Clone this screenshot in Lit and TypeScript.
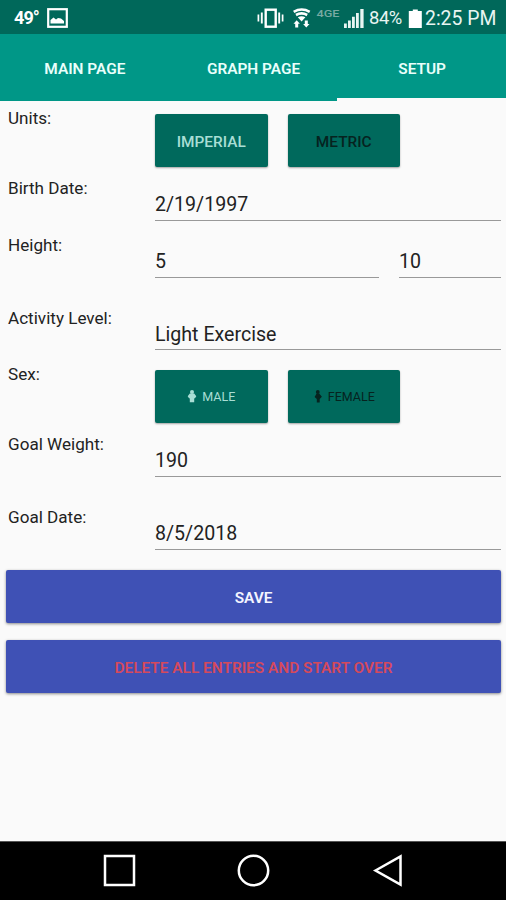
import { LitElement, html, css } from "lit";
import { customElement, state } from "lit/decorators.js";

const person = html`<svg class="person" width="10" height="13" viewBox="0 0 10 13">
  <circle cx="5" cy="2" r="2" />
  <path d="M2.800 3.600h4.400L9.300 6.200 7.800 8.500 7.200 8V12.300H2.800V8L2.200 8.500 .7 6.200z" />
</svg>`;

const personFemale = html`<svg class="person" width="10" height="13" viewBox="0 0 10 13">
  <circle cx="4.800" cy="2" r="1.900" />
  <path d="M3.600 3.400h2.600L8.900 6.800 6.700 9V12.500H3.800V9L1.600 7z" />
</svg>`;

@customElement("app-root")
export class AppRoot extends LitElement {
  @state() private tab = 2;

  static styles = css`
    :host {
      display: flex;
      flex-direction: column;
      width: 506px;
      height: 900px;
      overflow: hidden;
      background: #fafafa;
      color: #222;
      font-family: Roboto, sans-serif;
    }
    * { box-sizing: border-box; }
    svg { display: block; flex: none; }
    .status {
      height: 34px;
      flex: none;
      display: flex;
      align-items: center;
      padding: 2px 9px 0 14px;
      background: #00685a;
      color: #e8f5f2;
      font-size: 18px;
      white-space: nowrap;
    }
    .temp { font-weight: 700; width: 33px; color: #fff; letter-spacing: -0.9px; }
    .status svg, .pct, .temp { margin-top: -1px; }
    .right { margin-left: auto; display: flex; align-items: center; }
    .pct { width: 39px; font-size: 18.4px; letter-spacing: -0.45px; }
    .clock { font-size: 19.4px; width: 72px; padding-top: 1px; }
    .network { font: 500 9.5px Roboto, sans-serif; fill: #78aaa3; }
    .tabs {
      height: 67px;
      flex: none;
      display: grid;
      grid-template-columns: repeat(3, 1fr);
      background: #009787;
    }
    .tab {
      display: flex;
      align-items: center;
      justify-content: center;
      padding: 5px 0 0 1px;
      border-bottom: 3px solid transparent;
      color: #e9fffb;
      font-size: 15.4px;
      font-weight: 600;
    }
    .tab.active { border-color: #fafafa; }
    .form { padding: 7px 5px 0 8px; flex: 1; }
    .row { display: grid; grid-template-columns: 147px 1fr; }
    .h70 { height: 70px; }
    .h57 { height: 57px; }
    .h73 { height: 73px; }
    .h56 { height: 56px; }
    .label { font-size: 17.1px; line-height: 21px; white-space: nowrap; }
    .fields { display: flex; gap: 20px; }
    .field {
      flex: 1;
      height: 43px;
      padding-top: 14px;
      border-bottom: 1.5px solid #999;
      font-size: 19.6px;
      line-height: 26px;
    }
    .short { height: 42px; }
    .inches { flex: 0 0 102px; }
    .toggle {
      width: 112.5px;
      height: 53px;
      margin-top: 6px;
      display: flex;
      align-items: center;
      justify-content: center;
      gap: 5px;
      border-radius: 2px;
      background: #00695c;
      box-shadow: 0 1px 2px rgba(0, 0, 0, 0.35);
      color: #a9ded5;
      font-size: 15.4px;
      font-weight: 500;
      padding-top: 2px;
    }
    .toggle.off { color: #06231f; }
    .toggle.small { font-size: 12.5px; font-weight: 400; padding: 0; }
    .person { fill: currentColor; }
    .actions { display: grid; gap: 17px; margin: 7px 0 0 -2px; }
    .action {
      height: 53px;
      display: flex;
      align-items: center;
      justify-content: center;
      padding-top: 2px;
      border-radius: 2px;
      background: #3f51b5;
      box-shadow: 0 1px 3px rgba(0, 0, 0, 0.45);
      color: #f4f5ff;
      font-size: 15.4px;
      font-weight: 600;
    }
    .danger { color: #d5495c; }
    .nav {
      height: 59px;
      flex: none;
      background: #000;
      border-top: 1px solid #555;
      display: flex;
      justify-content: space-between;
      padding: 12px 102px 0 103px;
      fill: none;
      stroke: #fff;
      stroke-width: 2.5;
    }
  `;

  private field(value: string, cls = "") {
    return html`<div class="field ${cls}">${value}</div>`;
  }

  private row(size: string, label: string, content: unknown) {
    return html`<div class="row ${size}">
      <div class="label">${label}</div>
      <div class="fields">${content}</div>
    </div>`;
  }

  render() {
    return html`
      <div class="status">
        <span class="temp">49°</span>
        <svg width="21" height="20" viewBox="0 0 21 20">
          <rect x="1.200" y="1.200" width="18.600" height="17.600" fill="none" stroke="#fff" stroke-width="2.200" />
          <path d="M3.500 15.500V12l3-2.500 2.500 2 2-1.500 3 .5 3 2.500v2.500z" fill="#fff" />
        </svg>
        <div class="right">
          <svg width="112" height="24" viewBox="257 5 112 24">
            <g fill="none" stroke="#fff">
              <rect x="265.700" y="8.700" width="10" height="17" stroke-width="2.400" />
              <path d="M258.400 13.500v7M282.600 13.500v7" stroke-width="1.700" />
              <path d="M261.800 11.500v11M279.200 11.500v11" stroke-width="1.900" />
              <path d="M293.700 10.800q8-4.600 16 0M296 14q5.600-3.200 11.200 0" stroke-width="2.600" />
            </g>
            <path fill="#fff" d="M297.800 16.200q3.800-2 7.600 0l-3.800 4.200zM296.700 19.300l3.200 3.500h-1.700v3.600h-3v-3.600h-1.700zM306.300 26.600l-3.200-3.500h1.700v-3.600h3v3.600h1.700z" />
            <text class="network" x="316.500" y="16" textLength="23" lengthAdjust="spacingAndGlyphs">4GE</text>
            <path fill="#e8f5f2" d="M344 22.500h2.800v4.500h-2.800zM348 19.500h2.800v7.500h-2.800zM352 15.800h2.800v11.200h-2.800zM356 12h2.800v15h-2.800zM360.300 8h3.300v19h-3.300z" />
          </svg>
          <span class="pct">84%</span>
          <svg width="17" height="22" viewBox="408 6 17 22">
            <path fill="#fff" d="M408.800 10h4v-1.500h5v1.500h4v17h-13z" />
          </svg>
          <span class="clock">2:25 PM</span>
        </div>
      </div>
      <div class="tabs">
        ${["MAIN PAGE", "GRAPH PAGE", "SETUP"].map(
          (t, i) => html`<div class="tab ${i === this.tab ? "active" : ""}" @click=${() => (this.tab = i)}>${t}</div>`
        )}
      </div>
      <div class="form">
        ${this.row("h70", "Units:", html`<div class="toggle">IMPERIAL</div><div class="toggle off">METRIC</div>`)}
        ${this.row("h57", "Birth Date:", this.field("2/19/1997"))}
        ${this.row("h73", "Height:", html`${this.field("5")}${this.field("10", "inches")}`)}
        ${this.row("h56", "Activity Level:", this.field("Light Exercise", "short"))}
        ${this.row("h70", "Sex:", html`<div class="toggle small">${person}MALE</div><div class="toggle small off">${personFemale}FEMALE</div>`)}
        ${this.row("h73", "Goal Weight:", this.field("190"))}
        ${this.row("h56", "Goal Date:", this.field("8/5/2018"))}
        <div class="actions">
          <div class="action">SAVE</div>
          <div class="action danger">DELETE ALL ENTRIES AND START OVER</div>
        </div>
      </div>
      <div class="nav">
        <svg width="33" height="33"><rect x="2" y="2" width="29" height="29" /></svg>
        <svg width="33" height="33"><circle cx="16.500" cy="16.500" r="14.700" /></svg>
        <svg width="33" height="33"><path d="M4.500 16.500L29.500 2.500v28z" /></svg>
      </div>
    `;
  }
}
